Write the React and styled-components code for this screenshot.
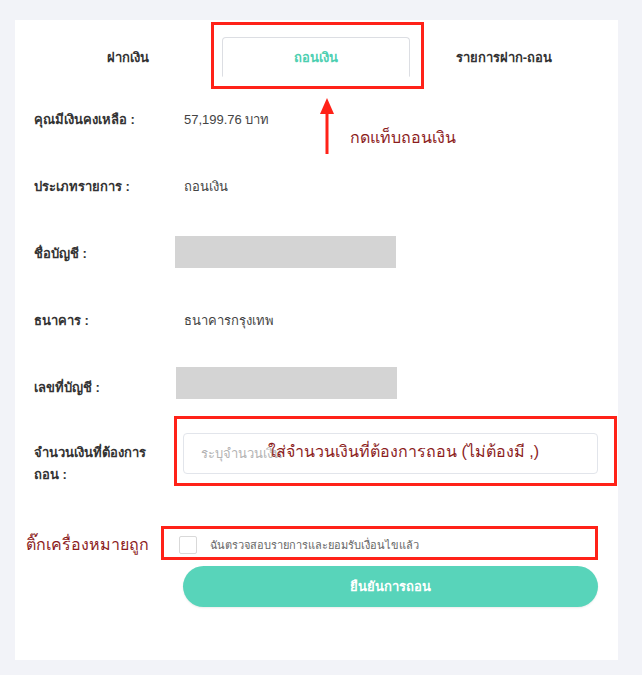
import React, { useState } from "react";
import styled, { createGlobalStyle } from "styled-components";

const GlobalStyle = createGlobalStyle`
  body {
    margin: 0;
    background: #f2f3f8;
    font-family: "Liberation Sans", "Noto Sans", sans-serif;
  }
`;

const Page = styled.div`
  position: relative;
  width: 642px;
  height: 675px;
  padding: 20px 0 0 15px;
  box-sizing: border-box;
`;

const Card = styled.div`
  width: 603px;
  height: 640px;
  background: #fff;
  padding: 17px 20px 0 19px;
  box-sizing: border-box;
`;

const Tabs = styled.div`
  display: grid;
  grid-template-columns: repeat(3, 1fr);
  border-bottom: 1px solid #dfe1e6;
  height: 39px;
`;

const Tab = styled.div`
  display: flex;
  align-items: center;
  justify-content: center;
  font-size: 13px;
  font-weight: bold;
  color: ${(p) => (p.active ? "#4ecfb1" : "#333")};
  border: 1px solid ${(p) => (p.active ? "#dcdee3" : "transparent")};
  border-bottom-color: ${(p) => (p.active ? "#fff" : "transparent")};
  border-radius: 4px 4px 0 0;
  margin-bottom: -1px;
  background: #fff;
`;

const Form = styled.div`
  padding-top: 9px;
`;

const Row = styled.div`
  display: grid;
  grid-template-columns: 141px 1fr;
  align-items: ${(p) => (p.top ? "start" : "center")};
  min-height: ${(p) => p.h || 67}px;
`;

const Label = styled.div`
  font-size: 13px;
  font-weight: bold;
  color: #333;
  line-height: 22px;
  padding-top: ${(p) => p.pt || 0}px;
`;

const Value = styled.div`
  font-size: 13px;
  color: #444;
  padding-left: 9px;
`;

const Hidden = styled.div`
  width: 221px;
  height: 32px;
  background: #d4d4d4;
  margin-top: ${(p) => p.mt || 0}px;
  margin-left: ${(p) => p.ml || 0}px;
`;

const Input = styled.input`
  margin: 12px 0 0 8px;
  width: 415px;
  height: 41px;
  box-sizing: border-box;
  border: 1px solid #e2e5eb;
  border-radius: 4px;
  padding: 0 17px;
  font-size: 13px;
  font-family: inherit;
  color: #333;
  outline: none;
  &::placeholder {
    color: #b3b3b3;
  }
`;

const CheckRow = styled.label`
  display: flex;
  align-items: center;
  gap: 13px;
  margin: 49px 0 0 145px;
  height: 20px;
  font-size: 11px;
  color: #666;
`;

const Box = styled.span`
  width: 16px;
  height: 16px;
  border: 1px solid #d9d9d9;
  border-radius: 2px;
  background: ${(p) => (p.checked ? "#58d4ba" : "#fff")};
`;

const Button = styled.button`
  display: block;
  margin: 11px 0 0 149px;
  width: 415px;
  height: 41px;
  border: none;
  border-radius: 21px;
  background: #58d4ba;
  color: #fff;
  font-size: 13px;
  font-weight: bold;
  font-family: inherit;
  box-shadow: 0 1px 2px rgba(0, 0, 0, 0.08);
`;

const Mark = styled.div`
  position: absolute;
  left: ${(p) => p.x}px;
  top: ${(p) => p.y}px;
  width: ${(p) => p.w}px;
  height: ${(p) => p.h}px;
  border: 3px solid #ff2218;
  box-sizing: border-box;
  pointer-events: none;
`;

const Note = styled.div`
  position: absolute;
  left: ${(p) => p.x}px;
  top: ${(p) => p.y}px;
  font-size: 16px;
  color: #8c1d1d;
  white-space: nowrap;
  line-height: 24px;
  pointer-events: none;
`;

const Arrow = styled.svg`
  position: absolute;
  left: 317px;
  top: 98px;
`;

export default function App() {
  const [checked, setChecked] = useState(false);
  return (
    <Page>
      <GlobalStyle />
      <Card>
        <Tabs>
          <Tab>ฝากเงิน</Tab>
          <Tab active>ถอนเงิน</Tab>
          <Tab>รายการฝาก-ถอน</Tab>
        </Tabs>
        <Form>
          <Row>
            <Label>คุณมีเงินคงเหลือ :</Label>
            <Value>57,199.76 บาท</Value>
          </Row>
          <Row>
            <Label>ประเภทรายการ :</Label>
            <Value>ถอนเงิน</Value>
          </Row>
          <Row>
            <Label>ชื่อบัญชี :</Label>
            <Hidden mt={-3} />
          </Row>
          <Row>
            <Label>ธนาคาร :</Label>
            <Value>ธนาคารกรุงเทพ</Value>
          </Row>
          <Row>
            <Label>เลขที่บัญชี :</Label>
            <Hidden mt={-10} ml={1} />
          </Row>
          <Row top h={53}>
            <Label pt={21}>
              จำนวนเงินที่ต้องการ
              <br />
              ถอน :
            </Label>
            <Input placeholder="ระบุจำนวนเงิน" />
          </Row>
          <CheckRow onClick={() => setChecked(!checked)}>
            <Box checked={checked} />
            ฉันตรวจสอบรายการและยอมรับเงื่อนไขแล้ว
          </CheckRow>
          <Button>ยืนยันการถอน</Button>
        </Form>
      </Card>

      <Mark x={211} y={22} w={213} h={67} />
      <Arrow width="20" height="56" viewBox="0 0 20 56">
        <path d="M10 0 L17 16 L3 16 Z" fill="#ff2218" />
        <rect x="8.5" y="14" width="3" height="42" fill="#ff2218" />
      </Arrow>
      <Note x={350} y={126}>กดแท็บถอนเงิน</Note>

      <Mark x={174} y={416} w={443} h={70} />
      <Note x={268} y={440}>ใส่จำนวนเงินที่ต้องการถอน (ไม่ต้องมี ,)</Note>

      <Mark x={161} y={526} w={437} h={34} />
      <Note x={26} y={533}>ติ๊กเครื่องหมายถูก</Note>
    </Page>
  );
}
